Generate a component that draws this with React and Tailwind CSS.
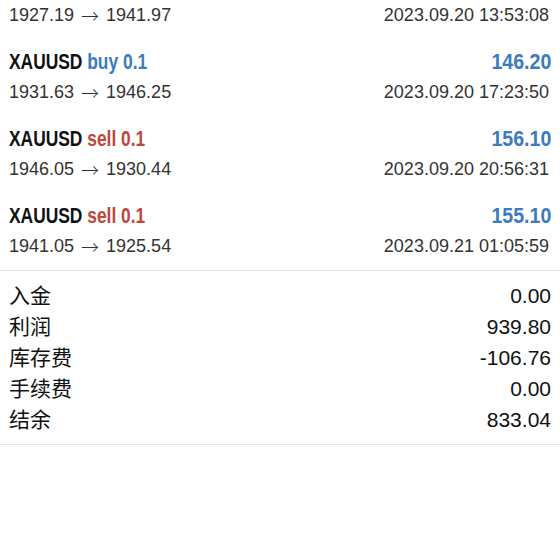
const trades = [
  { side: 'buy', lots: '0.1', profit: '146.20', open: '1931.63', close: '1946.25', time: '2023.09.20 17:23:50' },
  { side: 'sell', lots: '0.1', profit: '156.10', open: '1946.05', close: '1930.44', time: '2023.09.20 20:56:31' },
  { side: 'sell', lots: '0.1', profit: '155.10', open: '1941.05', close: '1925.54', time: '2023.09.21 01:05:59' },
];

const summary = [
  { label: '入金', value: '0.00' },
  { label: '利润', value: '939.80' },
  { label: '库存费', value: '-106.76' },
  { label: '手续费', value: '0.00' },
  { label: '结余', value: '833.04' },
];

const PriceLine = ({ open, close, time }) => (
  <div className="h-[30px] flex items-center justify-between text-[18px] text-[#333]">
    <span className="flex items-center">
      {open}
      <span className="inline-block w-[32px] text-center font-['Noto_Sans_CJK_SC',sans-serif] font-light">→</span>
      {close}
    </span>
    <span className="pr-[2px]">{time}</span>
  </div>
);

const TradeRow = ({ trade }) => (
  <div className="px-[9px] pt-[10px] pb-[5px]">
    <div className="h-[32px] flex items-center justify-between font-bold text-[22px]">
      <div className="inline-block origin-left scale-x-[0.79] whitespace-nowrap">
        <span className="text-[#111]">XAUUSD </span>
        <span className={trade.side === 'buy' ? 'text-[#3b7bc0]' : 'text-[#c0463e]'}>
          {trade.side} {trade.lots}
        </span>
      </div>
      <span className="inline-block origin-right scale-x-[0.89] text-[#3b7bc0]">{trade.profit}</span>
    </div>
    <PriceLine open={trade.open} close={trade.close} time={trade.time} />
  </div>
);

export default function App() {
  return (
    <div className="w-[560px] h-[560px] overflow-hidden bg-white font-['Liberation_Sans','Noto_Sans_CJK_SC',sans-serif]">
      <div className="px-[9px] pb-[5px]">
        <PriceLine open="1927.19" close="1941.97" time="2023.09.20 13:53:08" />
      </div>
      {trades.map((t, i) => (
        <TradeRow key={i} trade={t} />
      ))}
      <div className="mt-[4px] border-t border-b border-[#e6e6e6] pt-[9px] pb-[9px] px-[9px]">
        {summary.map((s) => (
          <div key={s.label} className="h-[31px] flex items-center justify-between text-[21px] text-[#111]">
            <span>{s.label}</span>
            <span>{s.value}</span>
          </div>
        ))}
      </div>
    </div>
  );
}
